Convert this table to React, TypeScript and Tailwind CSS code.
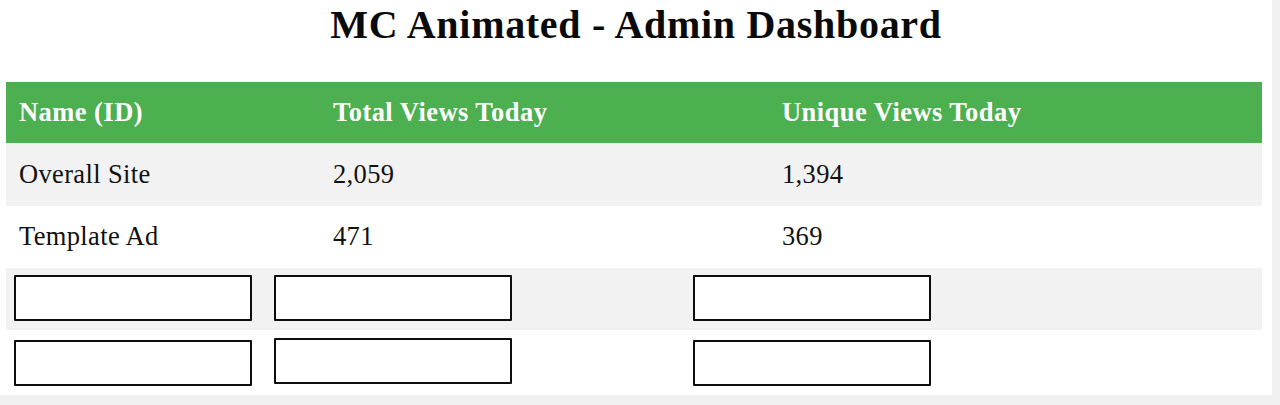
import React from "react";

const serif = "font-['Liberation_Serif','Times_New_Roman',serif]";

function Box({ className = "" }: { className?: string }) {
  return (
    <input
      type="text"
      className={`h-[46px] w-[238px] shrink-0 rounded-[1px] border-2 border-[#0d0d0d] bg-white outline-none ${className}`}
    />
  );
}

export default function App() {
  const rows = [
    { name: "Overall Site", total: "2,059", unique: "1,394", bg: "bg-[#f2f2f2]", h: "h-[63px]" },
    { name: "Template Ad", total: "471", unique: "369", bg: "bg-white", h: "h-[62px]" },
  ];
  return (
    <div className={`flex h-[405px] w-[1280px] bg-[#f0f0f0] ${serif}`}>
      <div className="h-[395px] w-[1272px] bg-white">
        <h1 className="pt-[2px] text-center text-[40px] font-bold leading-[46px] tracking-[0.7px] text-[#0a0a0a]">
          MC Animated - Admin Dashboard
        </h1>
        <div className="ml-[6px] mt-[34px] w-[1256px]">
          <div className="grid h-[61px] grid-cols-[314px_449px_493px] bg-[#4caf50] text-[26.5px] font-bold tracking-[0.45px] text-white">
            <div className="flex items-center pl-[13px]">Name (ID)</div>
            <div className="flex items-center pl-[13px]">Total Views Today</div>
            <div className="flex items-center pl-[13px]">Unique Views Today</div>
          </div>
          {rows.map((r) => (
            <div
              key={r.name}
              className={`grid grid-cols-[314px_449px_493px] ${r.h} ${r.bg} text-[26.5px] tracking-[0.35px] text-[#111]`}
            >
              <div className="flex items-center pl-[13px]">{r.name}</div>
              <div className="flex items-center pl-[13px]">{r.total}</div>
              <div className="flex items-center pl-[13px]">{r.unique}</div>
            </div>
          ))}
          <div className="flex h-[62px] items-start bg-[#f2f2f2] pl-[8px] pt-[7px]">
            <Box />
            <Box className="ml-[22px]" />
            <Box className="ml-[181px]" />
          </div>
          <div className="flex h-[65px] items-start bg-white pl-[8px] pt-[8px]">
            <Box className="mt-[2px]" />
            <Box className="ml-[22px]" />
            <Box className="ml-[181px] mt-[2px]" />
          </div>
        </div>
      </div>
    </div>
  );
}
